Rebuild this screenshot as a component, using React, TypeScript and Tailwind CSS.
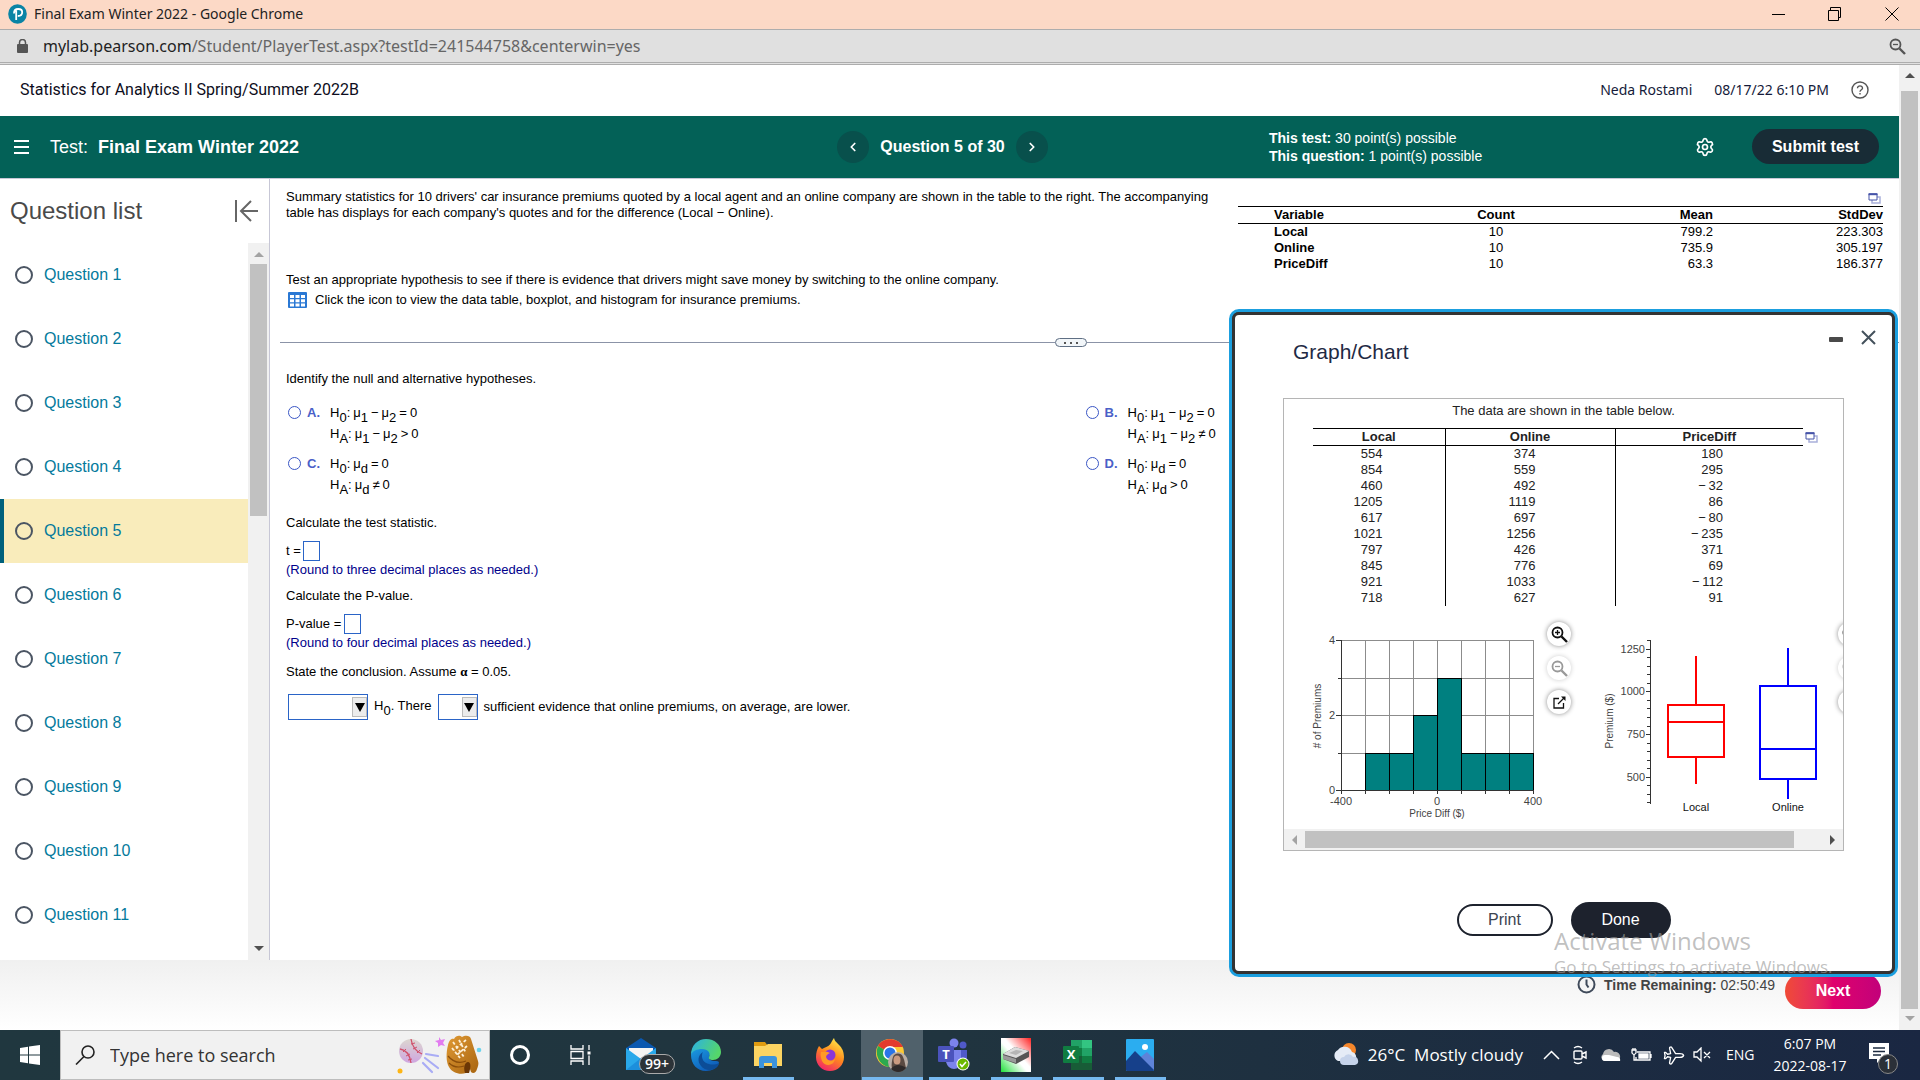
import React, { useState } from "react";
import { ChevronLeft, ChevronRight, Settings, Plane } from "lucide-react";

const questions = [1, 2, 3, 4, 5, 6, 7, 8, 9, 10, 11];

const summary = [
  ["Local", "10", "799.2", "223.303"],
  ["Online", "10", "735.9", "305.197"],
  ["PriceDiff", "10", "63.3", "186.377"],
];

const quotes = [
  ["554", "374", "180"],
  ["854", "559", "295"],
  ["460", "492", "−\u200932"],
  ["1205", "1119", "86"],
  ["617", "697", "−\u200980"],
  ["1021", "1256", "−\u2009235"],
  ["797", "426", "371"],
  ["845", "776", "69"],
  ["921", "1033", "−\u2009112"],
  ["718", "627", "91"],
];

const options = [
  { id: "A", kind: "diff", op: ">" },
  { id: "B", kind: "diff", op: "≠" },
  { id: "C", kind: "d", op: "≠" },
  { id: "D", kind: "d", op: ">" },
];

const bars = [0, 1, 1, 2, 3, 1, 1, 1];

function Sub({ children }: { children: React.ReactNode }) {
  return <sub className="bottom-0 align-[-5px] text-[13px] leading-none">{children}</sub>;
}

function Hypothesis({ sub, kind, op }: { sub: string; kind: string; op: string }) {
  return (
    <span className="flex h-[21px] items-baseline gap-[3px] leading-4 whitespace-nowrap">
      <span>
        H<Sub>{sub}</Sub>:
      </span>
      <span>
        μ<Sub>{kind === "diff" ? "1" : "d"}</Sub>
      </span>
      {kind === "diff" && (
        <>
          <span>−</span>
          <span>
            μ<Sub>2</Sub>
          </span>
        </>
      )}
      <span>{op}</span>
      <span>0</span>
    </span>
  );
}

function CopyIcon() {
  return (
    <svg width="13" height="11" viewBox="0 0 13 11" fill="none">
      <path d="M4 4h8v6H4z" stroke="#a9b0da" strokeWidth="1.5" />
      <path d="M1 1h8v6H1z" fill="#fff" stroke="#4654a8" />
      <path d="M0.5 1.2h9" stroke="#4654a8" strokeWidth="2" />
    </svg>
  );
}

function Magnifier({ sign, color }: { sign: "+" | "-"; color: string }) {
  return (
    <svg width="17" height="17" viewBox="0 0 17 17" fill="none" stroke={color}>
      <circle cx="6.5" cy="6.5" r="5" strokeWidth="1.8" />
      <path d="M10.5 10.5l5.5 5.5" strokeWidth="2.4" />
      <path d={sign === "+" ? "M4 6.5h5M6.5 4v5" : "M4 6.5h5"} strokeWidth="1.3" />
    </svg>
  );
}

function ChartTools() {
  const base = "flex size-6 shrink-0 items-center justify-center rounded-full bg-white";
  return (
    <div className="mt-4 flex w-6 shrink-0 flex-col gap-[10px]">
      <button aria-label="Zoom in" className={base + " shadow-[0_0_5px_rgba(0,0,0,0.45)]"}>
        <Magnifier sign="+" color="#111" />
      </button>
      <button aria-label="Zoom out" className={base + " shadow-[0_0_5px_rgba(0,0,0,0.2)]"}>
        <Magnifier sign="-" color="#999" />
      </button>
      <button aria-label="Open in new window" className={base + " shadow-[0_0_5px_rgba(0,0,0,0.45)]"}>
        <svg width="13" height="13" viewBox="0 0 13 13" fill="none" stroke="#111">
          <path d="M6 2.5H1v9.5h9.5V7" strokeWidth="1.3" />
          <path d="M5 8l6-6" strokeWidth="1.3" />
          <path d="M8 0.5h4.5V5z" fill="#111" stroke="none" />
        </svg>
      </button>
    </div>
  );
}

function Histogram() {
  return (
    <svg width="239" height="223" className="shrink-0 font-['Liberation_Sans',Arial,sans-serif] text-[11px]" fill="#444">
      <g stroke="#8c8c8c" shapeRendering="crispEdges">
        {[0, 1, 2, 3].map(i => (
          <path key={i} d={`M33 ${34.5 + i * 37.5}H225`} />
        ))}
        {[1, 2, 3, 4, 5, 6, 7, 8].map(i => (
          <path key={i} d={`M${33.5 + i * 24} 34V184`} />
        ))}
      </g>
      <g fill="#008080" stroke="#000" shapeRendering="crispEdges">
        {bars.map((n, i) =>
          n > 0 ? <rect key={i} x={33.5 + i * 24} y={184.5 - n * 37.5} width="24" height={n * 37.5} /> : null
        )}
      </g>
      <g stroke="#333" shapeRendering="crispEdges">
        <path d="M33.5 34V188M28 184.5H226" />
        <path d="M28 34.5h6M30 72h4M28 109.5h6M30 147h4" />
        {[1, 2, 3, 4, 5, 6, 7, 8].map(i => (
          <path key={i} d={`M${33.5 + i * 24} 184v4`} />
        ))}
      </g>
      <text x="27" y="38" textAnchor="end">4</text>
      <text x="27" y="113" textAnchor="end">2</text>
      <text x="27" y="188" textAnchor="end">0</text>
      <text x="33" y="199" textAnchor="middle">-400</text>
      <text x="129" y="199" textAnchor="middle">0</text>
      <text x="225" y="199" textAnchor="middle">400</text>
      <text x="129" y="211" textAnchor="middle" className="text-[10px]">Price Diff ($)</text>
      <text transform="translate(13 110) rotate(-90)" textAnchor="middle" className="text-[10px]"># of Premiums</text>
    </svg>
  );
}

function BoxPlots() {
  const ticks = Array.from({ length: 20 }, (_, i) => i);
  return (
    <svg width="240" height="223" className="shrink-0 font-['Liberation_Sans',Arial,sans-serif] text-[11px]" fill="#444">
      <g stroke="#333" shapeRendering="crispEdges">
        <path d="M52.5 34V198" />
        {ticks.map(i => (
          <path key={i} d={`M${i % 5 === 1 ? 48 : 49} ${Math.round(34 + i * 8.55) + 0.5}H53`} />
        ))}
      </g>
      <text x="47" y="47" textAnchor="end">1250</text>
      <text x="47" y="89" textAnchor="end">1000</text>
      <text x="47" y="132" textAnchor="end">750</text>
      <text x="47" y="175" textAnchor="end">500</text>
      <text transform="translate(15 115) rotate(-90)" textAnchor="middle" className="text-[10px]">Premium ($)</text>
      <g fill="none" strokeWidth="2" shapeRendering="crispEdges">
        <path stroke="#f00" d="M70 99h56v52H70zM70 116h56M98 50v49M98 151v27" />
        <path stroke="#00f" d="M162 80h56v93h-56zM162 143h56M190 42v38M190 173v20" />
      </g>
      <text x="98" y="205" textAnchor="middle" fill="#111">Local</text>
      <text x="190" y="205" textAnchor="middle" fill="#111">Online</text>
    </svg>
  );
}

function Arrow({ dir, color }: { dir: "up" | "down" | "left" | "right"; color: string }) {
  const d = {
    up: "M5 2l5 5H0z",
    down: "M0 3h10L5 8z",
    left: "M7 0v10L2 5z",
    right: "M3 0v10l5-5z",
  }[dir];
  return (
    <svg width="10" height="10" viewBox="0 0 10 10" fill={color}>
      <path d={d} />
    </svg>
  );
}

function GraphDialog() {
  return (
    <div
      role="dialog"
      aria-label="Graph/Chart"
      className="absolute top-[244px] right-px w-[669px] rounded-[10px] border-[3px] border-[#1b9fdf] bg-[#333]"
    >
      <div className="rounded-[7px] border-[3px] border-[#333] bg-white pt-[15px] pb-[33px]">
        <div className="flex items-start pr-4 pl-[58px]">
          <h2 className="mt-[10px] flex-1 text-[21px] leading-6 text-[#1f2a44]">Graph/Chart</h2>
          <button aria-label="Minimize" className="mt-[7px] mr-[18px] h-[5px] w-[14px] rounded-[1px] bg-[#4a4a4a]" />
          <button aria-label="Close" className="text-[#44515c]">
            <svg width="15" height="15" viewBox="0 0 15 15" stroke="currentColor" strokeWidth="2">
              <path d="M1 1l13 13M14 1L1 14" />
            </svg>
          </button>
        </div>
        <div className="mx-12 mt-[34px] overflow-hidden border border-[#b5b5b5]">
          <p className="pt-1 text-center text-[13px] leading-4 text-[#222]">The data are shown in the table below.</p>
          <div className="mt-[9px] ml-[29px] flex gap-[2px]">
            <table className="w-[490px] table-fixed border-collapse text-[13px] leading-4 text-[#222]">
              <colgroup>
                <col className="w-[132px]" />
                <col className="w-[170px]" />
                <col />
              </colgroup>
              <thead>
                <tr className="border-y border-black">
                  <th className="border-r border-black p-0 text-center font-bold">Local</th>
                  <th className="border-r border-black p-0 text-center font-bold">Online</th>
                  <th className="p-0 text-center font-bold">PriceDiff</th>
                </tr>
              </thead>
              <tbody>
                {quotes.map(q => (
                  <tr key={q[0]}>
                    <td className="border-r border-black py-0 pr-[62px] pl-0 text-right">{q[0]}</td>
                    <td className="border-r border-black py-0 pr-[79px] pl-0 text-right">{q[1]}</td>
                    <td className="py-0 pr-20 pl-0 text-right">{q[2]}</td>
                  </tr>
                ))}
              </tbody>
            </table>
            <button aria-label="Copy table" className="mt-1 self-start">
              <CopyIcon />
            </button>
          </div>
          <div className="ml-6 flex">
            <Histogram />
            <ChartTools />
            <div className="w-[27px] shrink-0" />
            <BoxPlots />
            <ChartTools />
          </div>
          <div className="flex h-[21px] items-center justify-between bg-[#f1f1f1] px-[6px]">
            <Arrow dir="left" color="#a3a3a3" />
            <div className="mr-[33px] ml-[5px] h-[17px] flex-1 bg-[#c1c1c1]" />
            <Arrow dir="right" color="#505050" />
          </div>
        </div>
        <div className="mt-[51px] flex items-center justify-center gap-[18px] text-base">
          <button className="h-8 w-24 rounded-full border-2 border-[#1d222d] bg-white leading-none text-[#3c4450]">Print</button>
          <button className="h-9 w-[100px] rounded-full bg-[#1d222d] leading-none text-white">Done</button>
        </div>
      </div>
    </div>
  );
}

function DropDown({ label, className, choices }: { label: string; className: string; choices: string[] }) {
  return (
    <span className={"relative inline-block h-[26px] " + className}>
      <select aria-label={label} className="h-full w-full appearance-none border border-[#2a64c7] bg-white px-1">
        <option></option>
        {choices.map(c => (
          <option key={c}>{c}</option>
        ))}
      </select>
      <span className="pointer-events-none absolute top-[3px] right-px flex h-5 w-[15px] items-center justify-center border border-[#bbb] bg-[#ececec]">
        <svg width="10" height="9" viewBox="0 0 10 9">
          <path d="M0 0h10L5 9z" />
        </svg>
      </span>
    </span>
  );
}

function Sidebar() {
  return (
    <aside className="flex w-[270px] shrink-0 flex-col border-r border-[#c7c7d6]">
      <div className="flex h-16 items-center justify-between pr-[11px] pl-[10px]">
        <h2 className="text-2xl text-[#4a4a4a]">Question list</h2>
        <button aria-label="Collapse question list">
          <svg width="24" height="22" viewBox="0 0 24 22" fill="none" stroke="#666" strokeWidth="2">
            <path d="M2 0v22M24 11H7M17 1L7 11l10 10" />
          </svg>
        </button>
      </div>
      <div className="flex flex-1">
        <ul className="flex-1">
          {questions.map(n => (
            <li key={n}>
              <a
                href="#"
                className={
                  "flex h-16 items-center gap-[11px] border-l-4 pl-[11px] text-base text-[#047a9c] " +
                  (n === 5 ? "border-[#00617c] bg-[#f9ecbb]" : "border-transparent")
                }
              >
                <span className="size-[18px] rounded-full border-2 border-[#4b5563]" />
                Question {n}
              </a>
            </li>
          ))}
        </ul>
        <div className="flex w-[21px] flex-col items-center bg-[#f1f1f1] pt-[7px] pb-[7px]">
          <Arrow dir="up" color="#a3a3a3" />
          <div className="mt-1 h-[252px] w-[17px] bg-[#c1c1c1]" />
          <div className="flex-1" />
          <Arrow dir="down" color="#505050" />
        </div>
      </div>
    </aside>
  );
}

function QuestionBody() {
  const [choice, setChoice] = useState("");
  return (
    <main className="min-w-0 flex-1 pt-[10px] text-[13px] leading-4 text-black">
      <div className="flex gap-6 pr-4 pl-4">
        <div className="flex-1">
          <p>
            Summary statistics for 10 drivers' car insurance premiums quoted by a local agent and an online company are shown
            in the table to the right. The accompanying table has displays for each company's quotes and for the difference
            (Local − Online).
          </p>
          <p className="mt-[51px]">
            Test an appropriate hypothesis to see if there is evidence that drivers might save money by switching to the
            online company.
          </p>
          <div className="mt-[3px] flex h-[18px] items-center gap-2 pl-[2px]">
            <button aria-label="View data table">
              <svg width="19" height="16" viewBox="0 0 19 16">
                <rect width="19" height="16" rx="1" fill="#2a78d4" />
                <path
                  fill="#fff"
                  d="M2 3h4v3H2zM7.500 3h4v3h-4zM13 3h4v3h-4zM2 7.200h4v3H2zM7.500 7.200h4v3h-4zM13 7.200h4v3h-4zM2 11.400h4v3H2zM7.500 11.400h4v3h-4zM13 11.400h4v3h-4z"
                />
              </svg>
            </button>
            <span>Click the icon to view the data table, boxplot, and histogram for insurance premiums.</span>
          </div>
        </div>
        <div className="w-[645px] shrink-0">
          <div className="flex h-[17px] items-end justify-end pr-[2px] pb-[2px]">
            <button aria-label="Copy table">
              <CopyIcon />
            </button>
          </div>
          <table className="w-full border-collapse">
            <colgroup>
              <col className="w-[155px]" />
              <col className="w-[206px]" />
              <col className="w-[114px]" />
              <col />
            </colgroup>
            <thead>
              <tr className="border-y border-black">
                <th className="py-0 pr-0 pl-9 text-left">Variable</th>
                <th className="p-0 text-center">Count</th>
                <th className="p-0 text-right">Mean</th>
                <th className="p-0 text-right">StdDev</th>
              </tr>
            </thead>
            <tbody>
              {summary.map(row => (
                <tr key={row[0]}>
                  <th className="py-0 pr-0 pl-9 text-left">{row[0]}</th>
                  <td className="p-0 text-center">{row[1]}</td>
                  <td className="p-0 text-right">{row[2]}</td>
                  <td className="p-0 text-right">{row[3]}</td>
                </tr>
              ))}
            </tbody>
          </table>
        </div>
      </div>

      <div className="mt-[29px] flex items-center pl-[10px]">
        <div className="h-px w-[775px] bg-[#8b93a7]" />
        <button
          aria-label="Resize panes"
          className="flex h-[9px] w-8 items-center justify-center gap-1 rounded-full border border-[#5f6f84] bg-[#f2f6f9]"
        >
          <span className="size-[2px] bg-[#555]" />
          <span className="size-[2px] bg-[#555]" />
          <span className="size-[2px] bg-[#555]" />
        </button>
        <div className="h-px flex-1 bg-[#8b93a7]" />
      </div>

      <div className="pr-4 pl-4">
        <p className="mt-6">Identify the null and alternative hypotheses.</p>
        <fieldset className="mt-[18px] grid grid-cols-2 gap-y-[9px] pl-[2px]">
          {options.map(o => (
            <label key={o.id} className="flex items-start">
              <input
                type="radio"
                name="hypotheses"
                checked={choice === o.id}
                onChange={() => setChoice(o.id)}
                className="mt-px size-[13px] appearance-none rounded-full border border-[#3a56c5] bg-white checked:bg-[#3a56c5]"
              />
              <span className="ml-[6px] w-[23px] font-bold text-[#4a5fc8]">{o.id}.</span>
              <span>
                <Hypothesis sub="0" kind={o.kind} op="=" />
                <Hypothesis sub="A" kind={o.kind} op={o.op} />
              </span>
            </label>
          ))}
        </fieldset>

        <p className="mt-[17px]">Calculate the test statistic.</p>
        <div className="mt-[10px] flex items-center gap-[2px]">
          <label htmlFor="t-stat">t =</label>
          <input id="t-stat" className="h-5 w-[17px] border border-[#2a64c7]" />
        </div>
        <p className="mt-px text-[#00008b]">(Round to three decimal places as needed.)</p>
        <p className="mt-[10px]">Calculate the P-value.</p>
        <div className="mt-[10px] flex items-center gap-[3px]">
          <label htmlFor="p-value">P-value =</label>
          <input id="p-value" className="h-5 w-[17px] border border-[#2a64c7]" />
        </div>
        <p className="mt-px text-[#00008b]">(Round to four decimal places as needed.)</p>
        <p className="mt-[13px]">
          State the conclusion. Assume <span className="font-['Liberation_Serif',serif] leading-none font-bold">α</span> = 0.05.
        </p>
        <div className="mt-[14px] flex items-center gap-[6px] pl-[2px]">
          <DropDown label="Decision" className="w-20" choices={["Reject", "Do not reject"]} />
          <span>
            H<Sub>0</Sub>. There
          </span>
          <DropDown label="Evidence" className="w-10" choices={["is", "is not"]} />
          <span>sufficient evidence that online premiums, on average, are lower.</span>
        </div>
      </div>
    </main>
  );
}

function PearsonLogo() {
  return (
    <svg width="19" height="20" viewBox="0 0 19 20" fill="none">
      <ellipse cx="9.500" cy="10" rx="9.300" ry="9.800" fill="#0a84a5" />
      <path d="M8.200 16V6.500M6 9.500c0-3 2-4.500 4.200-4.500 2.300 0 4 1.300 4 3.300 0 2.200-1.800 3.700-4.400 3.700" stroke="#fff" strokeWidth="1.800" />
    </svg>
  );
}

function SportsArt() {
  return (
    <svg width="86" height="40" viewBox="0 0 86 40" fill="none">
      <defs>
        <linearGradient id="ball" x1="0" y1="0" x2="0" y2="1">
          <stop offset="0" stopColor="#dcd6d0" />
          <stop offset="1" stopColor="#cfa6e0" />
        </linearGradient>
        <linearGradient id="glove" x1="0" y1="0" x2="1" y2="1">
          <stop offset="0" stopColor="#e09a35" />
          <stop offset="1" stopColor="#a8640f" />
        </linearGradient>
      </defs>
      <circle cx="15" cy="16" r="12" fill="url(#ball)" />
      <path d="M15 4c1 7 4 12 11 15M4 14c7 1 10 7 11 14" stroke="#d0506b" strokeWidth="1.300" />
      <path d="M15 9l4-1M17 14l4-2M21 18l3-3M7 17l3-3M10 21l4-2M12 25l4-1" stroke="#d0506b" />
      <path d="M30 19l12 2M29 23l13 10M27 28l9 9" stroke="#a9acf5" strokeWidth="2.200" strokeLinecap="round" />
      <path d="M43 2l2 3 4-1-2 4 2 3-4-1-3 2v-4l-3-2 4-1z" fill="#e27cf0" />
      <circle cx="4" cy="36" r="2.500" fill="#fdb515" />
      <circle cx="83" cy="15" r="2.300" fill="#6bd3ec" />
      <path
        d="M52 10c1-4 3-7 6-6 2-4 6-4 8-2 3-2 8-2 9 2l7 22c1 3 0 5-1 8-1 4-4 5-6 3l-2-6-3 7c-6 2-14 0-17-6-3-5-3-14-1-22z"
        fill="url(#glove)"
      />
      <path d="M57 7l11 15M63 5l7 13M56 13l8 10M70 5L58 15M71 11L61 20" stroke="#fdf0d8" strokeWidth="1.800" strokeDasharray="3 2" />
      <path d="M52 21c5 6 11 8 18 5M53 28c4 4 9 5 15 3" stroke="#8a4d0a" strokeWidth="1.200" />
      <path d="M69 38c-2-6 0-11 3-11s3 5 1 11z" fill="#6b3706" />
    </svg>
  );
}

function MailIcon() {
  return (
    <svg width="36" height="40" viewBox="0 0 36 40">
      <path d="M1 13L16 3l15 10v20H1z" fill="#0a58b0" />
      <path d="M4 13h24v12H4z" fill="#f4f4f4" />
      <path d="M1 13l15 11 15-11v22H1z" fill="#29a8ea" />
      <path d="M1 35l15-12 15 12z" fill="#1c8fdc" />
    </svg>
  );
}

function EdgeIcon() {
  return (
    <svg width="32" height="34" viewBox="0 0 32 34">
      <defs>
        <linearGradient id="edgeTop" x1="0" y1="0" x2="1" y2="0.4">
          <stop offset="0" stopColor="#2ab0e8" />
          <stop offset="1" stopColor="#55d66a" />
        </linearGradient>
        <linearGradient id="edgeLow" x1="0" y1="0" x2="0.6" y2="1">
          <stop offset="0" stopColor="#1b9de2" />
          <stop offset="1" stopColor="#0f5cb8" />
        </linearGradient>
      </defs>
      <path d="M1 17C1 11 6 9 11 9c7 0 10 4 9 8-2 2-1 6 4 6 3 0 5 0 5 2-2 5-7 8-13 8C7 33 1 26 1 17z" fill="url(#edgeLow)" />
      <path d="M1 17C1 7 8 1 16 1c9 0 15 6 15 13 0 5-4 8-8 8-3 0-5-1-4-3 2-4-1-8-7-8-5 0-10 2-11 6z" fill="url(#edgeTop)" />
      <path d="M13 14c-5 3-6 9-2 14 3 4 9 5 13 3 3-1 5-4 5-6-5 3-16 2-17-6 0-2 0-4 1-5z" fill="#0c4d97" />
    </svg>
  );
}

function FolderIcon() {
  return (
    <svg width="30" height="28" viewBox="0 0 30 28">
      <path d="M1 1h11l3 4H1z" fill="#e09b10" />
      <path d="M1 5h11l3-2h14v22H1z" fill="#fcd462" />
      <path d="M6 27v-9q0-3 3-3h12q3 0 3 3v9h-5v-5h-8v5z" fill="#3c93db" />
    </svg>
  );
}

function FirefoxIcon() {
  return (
    <svg width="30" height="34" viewBox="0 0 30 34">
      <defs>
        <linearGradient id="fox" x1="0.8" y1="0" x2="0.3" y2="1">
          <stop offset="0" stopColor="#fff04d" />
          <stop offset="0.5" stopColor="#ff8a1d" />
          <stop offset="1" stopColor="#f2256a" />
        </linearGradient>
      </defs>
      <path d="M4 8l3 3 2-1c3-1 6-3 7-5 1-2 2-4 3-5 1 5 6 6 8 11 1 1 2 5 2 8 0 8-6 14-14 14S1 27 1 19c0-4 1-8 3-11z" fill="url(#fox)" />
      <circle cx="15" cy="17" r="5.500" fill="#8a35d8" />
      <path d="M6 14c3 0 6-1 9 1-2 1-4 2-4 4 1 4 6 5 9 2-1 7-10 8-13 2-1-3-2-6-1-9z" fill="#ff9a26" />
    </svg>
  );
}

function ChromeIcon() {
  return (
    <svg width="34" height="38" viewBox="0 0 34 38">
      <circle cx="15" cy="17" r="14" fill="#fcc934" />
      <path d="M15 17L3 10C7 2 22 0 28 11H15z" fill="#e33b2e" />
      <path d="M3 10C-1 19 5 30 14 31l6-11-5-3z" fill="#2da94f" />
      <circle cx="15" cy="17" r="7" fill="#fff" />
      <circle cx="15" cy="17" r="5.500" fill="#2a75e8" />
      <circle cx="23" cy="26" r="10" fill="#b9aea6" />
      <path d="M17 33c-1-4 0-9 1-12 1-4 8-5 10 0 2 4 2 8 3 11-4 5-10 5-14 1z" fill="#5a4a42" />
      <ellipse cx="22" cy="24" rx="3.500" ry="4.500" fill="#c99a80" />
      <path d="M16 33c2-3 5-4 7-4s6 1 8 3c-4 5-11 5-15 1z" fill="#2e2a2a" />
    </svg>
  );
}

function TeamsIcon() {
  return (
    <svg width="34" height="34" viewBox="0 0 34 34">
      <circle cx="17" cy="5" r="4.500" fill="#7b83eb" />
      <circle cx="26" cy="7" r="3.500" fill="#5059c9" />
      <path d="M21 12h9v9q0 5-5 5h-4z" fill="#5059c9" />
      <path d="M9 12h15v12q-1 7-7 7t-8-7z" fill="#7b83eb" />
      <rect x="1" y="8" width="16" height="16" rx="1" fill="#4b53bc" />
      <text x="9" y="21" textAnchor="middle" fill="#fff" className="font-['Open_Sans',sans-serif] text-[13px] font-bold">T</text>
      <circle cx="26" cy="26" r="6.500" fill="#fff" />
      <circle cx="26" cy="26" r="5.500" fill="#6bb700" />
      <path d="M23 26l2 2.500 4-4.500" fill="none" stroke="#fff" strokeWidth="1.500" />
    </svg>
  );
}

function DriveIcon() {
  return (
    <svg width="30" height="34" viewBox="0 0 30 34">
      <defs>
        <linearGradient id="drive" x1="1" y1="0" x2="0" y2="1">
          <stop offset="0" stopColor="#f22" />
          <stop offset="0.45" stopColor="#fff" />
          <stop offset="0.55" stopColor="#fff" />
          <stop offset="1" stopColor="#1fe03a" />
        </linearGradient>
      </defs>
      <path d="M0 0h30v34H0z" fill="url(#drive)" />
      <path d="M2 16l12-7 14 4v6l-13 7-13-5z" fill="#555" />
      <path d="M2 16l12-7 14 4-13 7z" fill="#dcdcdc" />
      <path d="M2 17l13 4v4L2 21z" fill="#9a9a9a" />
      <path d="M8 15l7-3 7 1-7 4z" fill="#b5b5b5" />
    </svg>
  );
}

function ExcelIcon() {
  return (
    <svg width="30" height="32" viewBox="0 0 30 32">
      <path d="M8 1h11v8H8z" fill="#21a366" />
      <path d="M19 1h10v8H19z" fill="#33c481" />
      <path d="M8 9h11v8H8z" fill="#107c41" />
      <path d="M19 9h10v8H19z" fill="#21a366" />
      <path d="M8 17h21v14H8z" fill="#185c37" />
      <path d="M19 17h10v7H19z" fill="#107c41" />
      <rect x="0" y="7" width="16" height="17" rx="1" fill="#107c41" />
      <text x="8" y="20" textAnchor="middle" fill="#fff" className="font-['Open_Sans',sans-serif] text-[13px] font-bold">X</text>
    </svg>
  );
}

function PhotosIcon() {
  return (
    <svg width="28" height="32" viewBox="0 0 28 32">
      <rect width="28" height="32" rx="1" fill="#2badf0" />
      <path d="M12 20l9-7 7 7v11H12z" fill="#5e83d8" />
      <path d="M0 22l9-10 19 19q0 1-1 1H1q-1 0-1-1z" fill="#16408a" />
      <circle cx="19" cy="8" r="3" fill="#fff" />
    </svg>
  );
}

const apps = [
  { name: "Edge", icon: <EdgeIcon />, line: "" },
  { name: "File Explorer", icon: <FolderIcon />, line: "w-[51px]" },
  { name: "Firefox", icon: <FirefoxIcon />, line: "" },
  { name: "Chrome", icon: <ChromeIcon />, line: "w-[61px]" },
  { name: "Teams", icon: <TeamsIcon />, line: "w-[51px]" },
  { name: "Drive", icon: <DriveIcon />, line: "w-[51px]" },
  { name: "Excel", icon: <ExcelIcon />, line: "w-[51px]" },
  { name: "Photos", icon: <PhotosIcon />, line: "w-[51px]" },
];

function Taskbar() {
  return (
    <footer className="flex h-[50px] items-stretch bg-linear-to-r from-[#20373f] via-[#20343f] to-[#1a2742] font-['Open_Sans','Noto_Sans',sans-serif] text-white">
      <button aria-label="Start" className="flex w-[60px] items-center justify-center">
        <svg width="20" height="20" viewBox="0 0 20 20" fill="#fff">
          <path d="M0 3l8-1.200v7.700H0zM9 1.600L20 0v9.500H9zM0 10.500h8v7.700L0 17zM9 10.500h11V20L9 18.400z" />
        </svg>
      </button>
      <label className="flex w-[430px] items-center border border-[#bdbdbd] bg-[#f1f1f1] pl-[14px]">
        <svg width="21" height="20" viewBox="0 0 21 20" fill="none" stroke="#222" strokeWidth="1.600">
          <circle cx="13" cy="7" r="6" />
          <path d="M9 11.500L1 19.500" />
        </svg>
        <input
          aria-label="Search"
          placeholder="Type here to search"
          className="ml-[14px] min-w-0 flex-1 text-lg text-[#333] outline-none placeholder:text-[#333]"
        />
        <span className="mr-[7px]">
          <SportsArt />
        </span>
      </label>
      <button aria-label="Cortana" className="flex w-[60px] items-center justify-center">
        <span className="size-5 rounded-full border-[3px] border-white" />
      </button>
      <button aria-label="Task view" className="flex w-[60px] items-center justify-center">
        <svg width="21" height="20" viewBox="0 0 21 20" fill="none" stroke="#fff" strokeWidth="1.300">
          <path d="M1 0v4h12V0M1 20v-4h12v4M1 6.500h12v7H1zM19 0v5M19 10.500V20" />
          <path d="M17.500 6.500h3v3h-3z" fill="#fff" stroke="none" />
        </svg>
      </button>
      <button aria-label="Mail, 99+ unread" className="relative flex w-[65px] items-center justify-center">
        <MailIcon />
        <span className="absolute top-6 left-[29px] flex h-5 w-[36px] items-center justify-center rounded-full border border-[#aaa] bg-[#2c3338] text-sm font-semibold">
          99+
        </span>
      </button>
      {apps.map(a => (
        <button
          key={a.name}
          aria-label={a.name}
          className={"relative flex w-[62px] items-center justify-center " + (a.name === "Chrome" ? "bg-[#50616b]" : "")}
        >
          {a.icon}
          {a.line && <span className={"absolute bottom-0 h-[3px] bg-[#76b9f0] " + a.line} />}
        </button>
      ))}
      <div className="flex-1" />
      <div className="flex items-center gap-2 text-[17px]">
        <svg width="28" height="26" viewBox="0 0 28 26">
          <circle cx="17" cy="8" r="7" fill="#f5862a" />
          <path d="M6 19a6 6 0 010-11 8 8 0 0114 2 5 5 0 012 9z" fill="#e5ecf6" />
          <path d="M12 23a4 4 0 010-8 5 5 0 019 0 4 4 0 012 8z" fill="#c5d3ea" />
        </svg>
        <span className="whitespace-pre">26°C  Mostly cloudy</span>
      </div>
      <div className="ml-5 flex items-center gap-[10px]">
        <svg width="17" height="10" viewBox="0 0 17 10" fill="none" stroke="#fff" strokeWidth="1.500">
          <path d="M1 9l7.500-7.500L16 9" />
        </svg>
        <svg width="20" height="20" viewBox="0 0 20 20" fill="none" stroke="#fff" strokeWidth="1.400">
          <path d="M5 6q-1 0-1 1v6q0 1 1 1h6q1 0 1-1V7q0-1-1-1zM12 9l4-2v6l-4-2M4 3q4-3 8 0M4 17q4 3 8 0" />
        </svg>
        <svg width="21" height="14" viewBox="0 0 21 14">
          <path d="M4 13a4 4 0 01-1-7 6 6 0 0111-2 5 5 0 016 6l-1 3z" fill="#bbb" />
          <path d="M5 13a3 3 0 010-6l4 0 8 2a3 3 0 013 4z" fill="#fff" />
        </svg>
        <svg width="21" height="14" viewBox="0 0 21 14" fill="none" stroke="#fff" strokeWidth="1.300">
          <path d="M6 4h13v8H5V9M20 6v4M1 2v3q2 3 4 0V2zM2 0v2M4 0v2M3 6v6h2" />
          <path d="M8 6h9v4H8z" fill="#fff" />
        </svg>
        <Plane size={21} strokeWidth={1.5} className="rotate-45" />
        <svg width="19" height="16" viewBox="0 0 19 16" fill="none" stroke="#fff" strokeWidth="1.300">
          <path d="M1 5h3l4-4v13l-4-4H1zM11 5l6 6M17 5l-6 6" />
        </svg>
      </div>
      <span className="ml-[14px] flex w-[30px] items-center text-sm">ENG</span>
      <div className="ml-3 flex w-[84px] flex-col justify-center text-center text-sm leading-[22px] whitespace-nowrap">
        <span>6:07 PM</span>
        <span>2022-08-17</span>
      </div>
      <button aria-label="Notifications, 1 new" className="relative ml-[17px] w-[51px]">
        <svg width="20" height="21" viewBox="0 0 20 21" fill="none" className="mb-1">
          <path d="M0 0h20v16h-8l-4 4v-4H0z" fill="#fff" />
          <path d="M4 5h12M4 8.500h12M4 12h8" stroke="#1d2b40" strokeWidth="1.300" />
        </svg>
        <span className="absolute top-6 left-[9px] flex size-5 items-center justify-center rounded-full border border-[#888] bg-[#2b3038] text-sm">
          1
        </span>
      </button>
    </footer>
  );
}

export default function App() {
  return (
    <div className="flex min-h-screen flex-col bg-white font-['Liberation_Sans',Arial,sans-serif]">
      {/* window title */}
      <div className="flex h-[30px] items-center border-b border-[#adadad] bg-[#fcd9c6] pr-[21px] pb-px pl-2 font-['Noto_Sans','Open_Sans',sans-serif] text-sm text-[#222]">
        <PearsonLogo />
        <span className="ml-[7px] flex-1">Final Exam Winter 2022 - Google Chrome</span>
        <div className="flex items-center gap-[43px] text-black">
          <button aria-label="Minimize window" className="h-px w-[13px] bg-black" />
          <button aria-label="Restore window">
            <svg width="14" height="14" viewBox="0 0 14 14" fill="none" stroke="currentColor">
              <path d="M0.500 3.500h10v10h-10zM2.500 3.500v-3h10v10h-2" />
            </svg>
          </button>
          <button aria-label="Close window">
            <svg width="14" height="14" viewBox="0 0 14 14" stroke="currentColor">
              <path d="M0.500 0.500l13 13M13.500 0.500l-13 13" />
            </svg>
          </button>
        </div>
      </div>

      {/* address bar */}
      <div className="flex h-[35px] items-center border-b-[3px] border-double border-[#adadad] bg-[#e0e0e0] pr-[14px] pl-[17px] font-['Noto_Sans','Open_Sans',sans-serif] text-base text-[#666]">
        <svg width="11" height="14" viewBox="0 0 11 14" className="mr-[15px]">
          <rect y="5" width="11" height="9" rx="1" fill="#555" />
          <path d="M2.500 5V3.500a3 3 0 016 0V5" fill="none" stroke="#555" strokeWidth="1.500" />
        </svg>
        <span className="flex-1">
          <span className="text-[#222]">mylab.pearson.com</span>/Student/PlayerTest.aspx?testId=241544758&amp;centerwin=yes
        </span>
        <Magnifier sign="-" color="#555" />
      </div>

      <div className="flex flex-1">
        <div className="relative flex min-w-0 flex-1 flex-col">
          <header className="flex h-[51px] items-center pr-[30px] pb-[2px] pl-5 text-[#151a3a]">
            <h1 className="flex-1 font-[Roboto,sans-serif] text-base text-[#0d0d20]">Statistics for Analytics II Spring/Summer 2022B</h1>
            <div className="flex items-center gap-[22px] font-['Noto_Sans','Open_Sans',sans-serif] text-sm">
              <span>Neda Rostami</span>
              <span>08/17/22 6:10 PM</span>
              <button aria-label="Help">
                <svg width="18" height="18" viewBox="0 0 18 18" fill="none" stroke="#555" strokeWidth="1.400">
                  <circle cx="9" cy="9" r="8" />
                  <path d="M6.500 7.200a2.500 2.300 0 115 0c0 1.600-2.500 1.600-2.500 3.600M9 12v1.600" />
                </svg>
              </button>
            </div>
          </header>

          <div className="flex h-[63px] items-center border-b border-[#c7c7d6] bg-[#036157] pr-5 pb-px pl-[14px] text-white">
            <button aria-label="Menu" className="flex w-[15px] flex-col gap-1">
              <span className="h-[2px] bg-white" />
              <span className="h-[2px] bg-white" />
              <span className="h-[2px] bg-white" />
            </button>
            <p className="ml-[21px] w-[787px] text-lg">
              Test: &nbsp;<b>Final Exam Winter 2022</b>
            </p>
            <div className="flex flex-1 items-center">
              <button aria-label="Previous question" className="flex size-8 items-center justify-center rounded-full bg-[#08504c]">
                <ChevronLeft size={14} strokeWidth={3} />
              </button>
              <span className="w-[147px] text-center text-base font-bold">Question 5 of 30</span>
              <button aria-label="Next question" className="flex size-8 items-center justify-center rounded-full bg-[#08504c]">
                <ChevronRight size={14} strokeWidth={3} />
              </button>
            </div>
            <div className="w-[426px] text-sm leading-[18px]">
              <p>
                <b>This test:</b> 30 point(s) possible
              </p>
              <p>
                <b>This question:</b> 1 point(s) possible
              </p>
            </div>
            <button aria-label="Settings" className="mr-[37px]">
              <Settings size={20} strokeWidth={2} />
            </button>
            <button className="h-[35px] w-[127px] rounded-full bg-[#182c36] text-base font-bold">Submit test</button>
          </div>

          <div className="flex flex-1">
            <Sidebar />
            <QuestionBody />
          </div>

          <div className="flex h-[70px] items-start bg-linear-to-b from-[#f0f0f0] to-white pt-[13px] pr-[18px] text-sm text-[#444]">
            <div className="flex-1" />
            <svg width="19" height="19" viewBox="0 0 19 19" fill="none" stroke="#3f4a5a" strokeWidth="2" className="mt-[2px]">
              <circle cx="9.500" cy="9.500" r="8" />
              <path d="M9.500 4.500v5l2 3" />
            </svg>
            <p className="mt-1 mr-[10px] ml-2 leading-4">
              <b>Time Remaining:</b> 02:50:49
            </p>
            <button className="h-9 w-24 rounded-full bg-linear-to-r from-[#f04a35] via-[#e0006c] to-[#c2007a] text-base font-bold text-white">
              Next
            </button>
          </div>

          <GraphDialog />

          <div className="pointer-events-none absolute right-[60px] bottom-[53px] w-[285px] font-['Open_Sans','Noto_Sans',sans-serif] whitespace-nowrap text-[#9c9c9c]/65">
            <p className="text-2xl leading-8">Activate Windows</p>
            <p className="text-[17px] leading-5">Go to Settings to activate Windows.</p>
          </div>
        </div>

        <div className="flex w-[21px] shrink-0 flex-col items-center bg-[#f1f1f1] pt-[6px] pb-[7px]">
          <Arrow dir="up" color="#505050" />
          <div className="mt-[10px] mb-1 w-[17px] flex-1 bg-[#c1c1c1]" />
          <Arrow dir="down" color="#a3a3a3" />
        </div>
      </div>

      <Taskbar />
    </div>
  );
}
